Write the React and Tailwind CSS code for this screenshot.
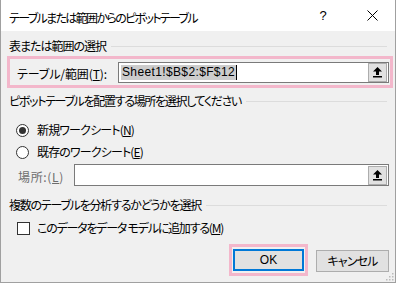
import React, { useLayoutEffect, useRef, useState } from "react";

const jp = "font-['Meiryo_UI','Noto_Sans_CJK_JP',sans-serif] [font-feature-settings:'palt']";

function Fit({ w, className = "", children }) {
  const ref = useRef(null);
  const [ls, setLs] = useState(0);
  useLayoutEffect(() => {
    const el = ref.current;
    if (!el) return;
    const prev = el.style.letterSpacing;
    el.style.letterSpacing = "0px";
    const natural = el.getBoundingClientRect().width;
    el.style.letterSpacing = prev;
    const n = el.textContent.length;
    setLs((w - natural) / n);
  }, [w]);
  return (
    <span ref={ref} className={`inline-block whitespace-nowrap ${className}`} style={{ letterSpacing: `${ls}px` }}>
      {children}
    </span>
  );
}

function UpBtn() {
  return (
    <div className="w-[19px] h-[19px] bg-[#e1e1e1] border border-[#adadad] flex items-center justify-center">
      <svg width="11" height="12" viewBox="0 0 11 12">
        <path d="M5.5 1 L10 5.5 L7 5.5 L7 9 L4 9 L4 5.5 L1 5.5 Z" fill="#000" />
        <rect x="1" y="10" width="9" height="1.5" fill="#000" />
      </svg>
    </div>
  );
}

function Header({ children, w }) {
  return (
    <div className="flex items-center h-[16px] pl-[8px] pr-[8px]">
      <Fit w={w} className="text-[12px] leading-[16px] text-black">{children}</Fit>
      <div className="flex-1 h-px bg-[#dcdcdc] ml-[5px]" />
    </div>
  );
}

export default function App() {
  return (
    <div className={`w-[396px] h-[283px] bg-[#f0f0f0] border-l border-r border-b border-[#a0a0a0] flex flex-col overflow-hidden ${jp}`}>
      <div className="h-[31px] bg-white flex items-center pl-[8px] shrink-0">
        <div className="flex-1">
          <Fit w={188} className="text-[12px] text-black">テーブルまたは範囲からのピボットテーブル</Fit>
        </div>
        <span className="text-[13px] text-black w-[20px] mr-[16px] text-center font-['Liberation_Sans',sans-serif]">?</span>
        <div className="w-[46px] flex justify-center">
          <svg width="11" height="11" viewBox="0 0 11 11">
            <path d="M0.5 0.5 L10.5 10.5 M10.5 0.5 L0.5 10.5" stroke="#000" strokeWidth="1" />
          </svg>
        </div>
      </div>

      <div className="mt-[7px]">
        <Header w={97}>表または範囲の選択</Header>
      </div>

      <div className="mt-[2px] ml-[6px] mr-[2px] h-[32px] border-[3px] border-[#f3b7cb] flex items-center">
        <div className="ml-[7px] w-[101px]">
          <Fit w={90} className="text-[12px] text-black">
            テーブル/範囲(<span className="underline">T</span>):
          </Fit>
        </div>
        <div className="w-[271px] h-[21px] bg-white border border-[#7a7a7a] flex items-center pl-[2px] pr-[1px]">
          <div className="flex-1 flex items-center">
            <span className="bg-[#cccccc] leading-[15px] px-[1px] flex">
              <Fit w={113} className="text-[12px] leading-[15px] text-black font-['Liberation_Sans',sans-serif]">Sheet1!$B$2:$F$12</Fit>
            </span>
            <span className="w-px h-[15px] bg-black" />
          </div>
          <UpBtn />
        </div>
      </div>

      <div className="mt-[5px]">
        <Header w={232}>ピボットテーブルを配置する場所を選択してください</Header>
      </div>

      <div className="mt-[11px] h-[20px] flex items-center pl-[15px]">
        <div className="w-[13px] h-[13px] rounded-full border border-[#333] bg-white flex items-center justify-center">
          <div className="w-[7px] h-[7px] rounded-full bg-[#333]" />
        </div>
        <Fit w={97} className="ml-[8px] text-[12px] text-black">新規ワークシート(<span className="underline">N</span>)</Fit>
      </div>
      <div className="mt-[2px] h-[20px] flex items-center pl-[15px]">
        <div className="w-[13px] h-[13px] rounded-full border border-[#333] bg-white" />
        <Fit w={106} className="ml-[8px] text-[12px] text-black">既存のワークシート(<span className="underline">E</span>)</Fit>
      </div>
      <div className="mt-[2px] h-[22px] flex items-center pl-[17px]">
        <div className="w-[56px]">
          <Fit w={46} className="text-[12px] text-[#6d6d6d]">場所:(<span className="underline">L</span>)</Fit>
        </div>
        <div className="w-[315px] h-[22px] bg-white border border-[#7a7a7a] flex items-center justify-end pr-[1px]">
          <UpBtn />
        </div>
      </div>

      <div className="mt-[11px]">
        <Header w={192}>複数のテーブルを分析するかどうかを選択</Header>
      </div>

      <div className="mt-[6px] h-[18px] flex items-center pl-[16px]">
        <div className="w-[13px] h-[13px] border border-[#333] bg-white" />
        <Fit w={186} className="ml-[7px] text-[12px] text-black">このデータをデータ モデルに追加する(<span className="underline">M</span>)</Fit>
      </div>

      <div className="mt-[7px] flex items-start pl-[228px]">
        <div className="w-[79px] h-[32px] border-[3px] border-[#f3b7cb] p-[1px] flex items-center justify-center">
          <div className="w-[73px] h-[22px] bg-[#e1e1e1] border-2 border-[#0078d7] flex items-center justify-center text-[12px] text-black font-['Liberation_Sans',sans-serif]">
            OK
          </div>
        </div>
        <div className="ml-[8px] mt-[6px] w-[73px] h-[22px] bg-[#e1e1e1] border border-[#adadad] flex items-center justify-center">
          <Fit w={50} className="text-[12px] text-black">キャンセル</Fit>
        </div>
      </div>
      <div className="relative flex-1">
        <svg className="absolute right-[1px] bottom-[1px]" width="8" height="8" viewBox="0 0 8 8">
          <rect x="6" y="0" width="1.5" height="1.5" fill="#bbb" />
          <rect x="3" y="3" width="1.5" height="1.5" fill="#bbb" />
          <rect x="6" y="3" width="1.5" height="1.5" fill="#bbb" />
          <rect x="0" y="6" width="1.5" height="1.5" fill="#bbb" />
          <rect x="3" y="6" width="1.5" height="1.5" fill="#bbb" />
          <rect x="6" y="6" width="1.5" height="1.5" fill="#bbb" />
        </svg>
      </div>
    </div>
  );
}
